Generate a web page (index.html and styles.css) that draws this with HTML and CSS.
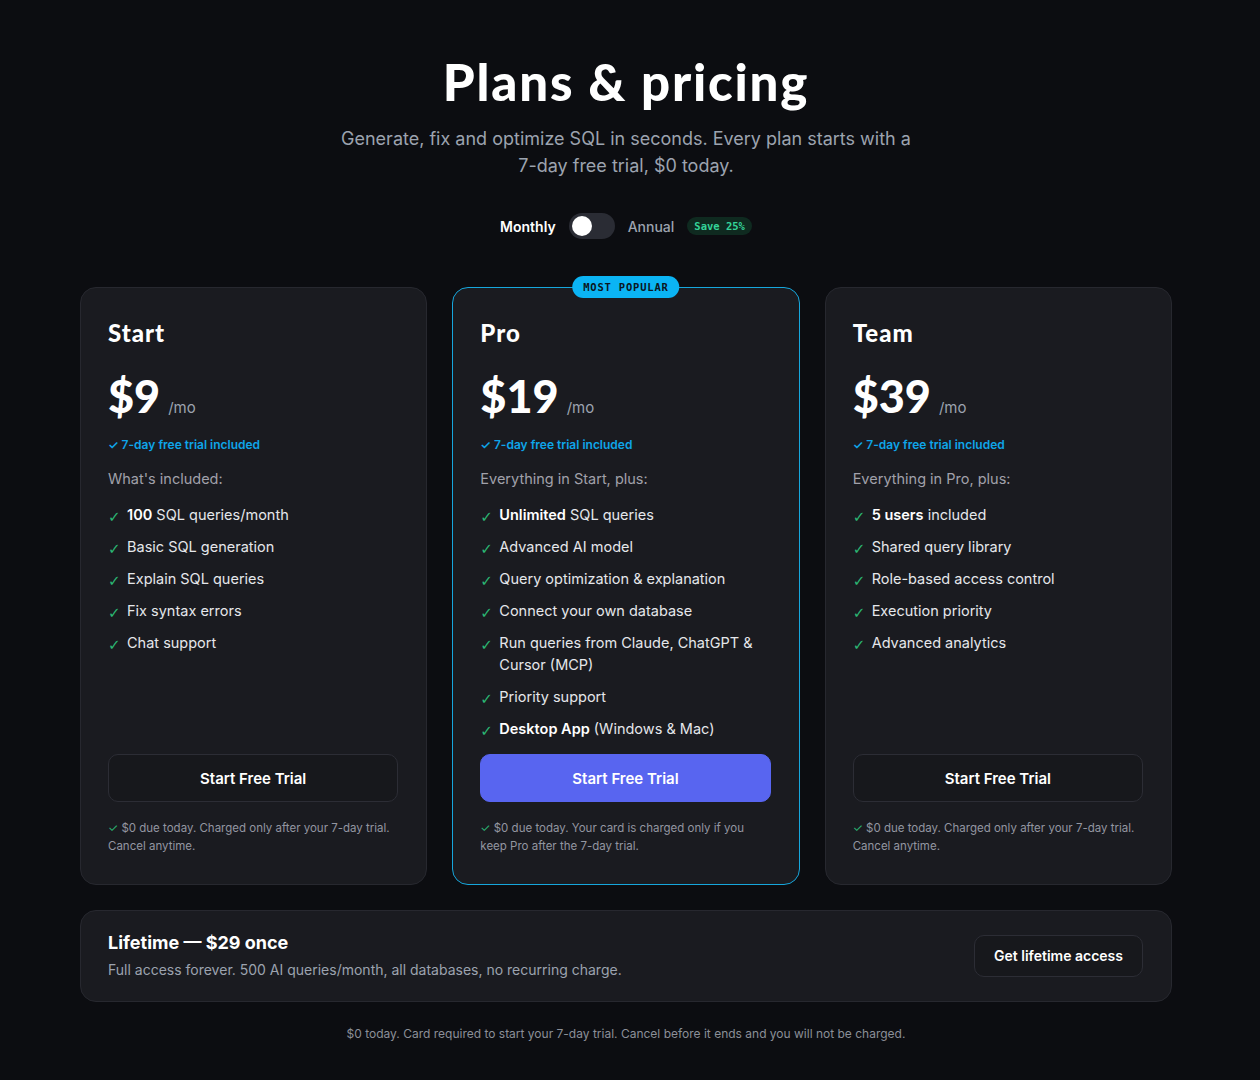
FILE: index.html
```html
<!DOCTYPE html>
<html lang="en">
<head>
  <meta charset="UTF-8" />
  <meta name="viewport" content="width=device-width, initial-scale=1" />
  <title>Plans &amp; pricing</title>
  <link rel="stylesheet" href="styles.css">
</head>
<body>

  <div class="page">
    <header class="intro">
      <h1>Plans &amp; pricing</h1>
      <p class="lead">Generate, fix and optimize SQL in seconds. Every plan starts with a 7-day free trial, $0 today.</p>

      <div class="billing">
        <span class="billing-label active">Monthly</span>
        <button class="switch" type="button" aria-label="Toggle annual billing"><span class="knob"></span></button>
        <span class="billing-label">Annual</span>
        <span class="save">Save 25%</span>
      </div>
    </header>

    <div class="plans">
      <div class="plan">
        <h2>Start</h2>
        <div class="price"><span class="amount">$9</span><span class="per">/mo</span></div>
        <div class="trial">✓ 7-day free trial included</div>
        <div class="included">What's included:</div>
        <ul class="features">
          <li><span class="tick">✓</span><span><b>100</b> SQL queries/month</span></li>
          <li><span class="tick">✓</span><span>Basic SQL generation</span></li>
          <li><span class="tick">✓</span><span>Explain SQL queries</span></li>
          <li><span class="tick">✓</span><span>Fix syntax errors</span></li>
          <li><span class="tick">✓</span><span>Chat support</span></li>
        </ul>
        <button class="btn" type="button">Start Free Trial</button>
        <p class="fine">✓ $0 due today. Charged only after your 7-day trial. Cancel anytime.</p>
      </div>

      <div class="plan featured">
        <span class="badge">MOST POPULAR</span>
        <h2>Pro</h2>
        <div class="price"><span class="amount">$19</span><span class="per">/mo</span></div>
        <div class="trial">✓ 7-day free trial included</div>
        <div class="included">Everything in Start, plus:</div>
        <ul class="features">
          <li><span class="tick">✓</span><span><b>Unlimited</b> SQL queries</span></li>
          <li><span class="tick">✓</span><span>Advanced AI model</span></li>
          <li><span class="tick">✓</span><span>Query optimization &amp; explanation</span></li>
          <li><span class="tick">✓</span><span>Connect your own database</span></li>
          <li><span class="tick">✓</span><span>Run queries from Claude, ChatGPT &amp; Cursor (MCP)</span></li>
          <li><span class="tick">✓</span><span>Priority support</span></li>
          <li><span class="tick">✓</span><span><b>Desktop App</b> (Windows &amp; Mac)</span></li>
        </ul>
        <button class="btn btn-primary" type="button">Start Free Trial</button>
        <p class="fine">✓ $0 due today. Your card is charged only if you keep Pro after the 7-day trial.</p>
      </div>

      <div class="plan">
        <h2>Team</h2>
        <div class="price"><span class="amount">$39</span><span class="per">/mo</span></div>
        <div class="trial">✓ 7-day free trial included</div>
        <div class="included">Everything in Pro, plus:</div>
        <ul class="features">
          <li><span class="tick">✓</span><span><b>5 users</b> included</span></li>
          <li><span class="tick">✓</span><span>Shared query library</span></li>
          <li><span class="tick">✓</span><span>Role-based access control</span></li>
          <li><span class="tick">✓</span><span>Execution priority</span></li>
          <li><span class="tick">✓</span><span>Advanced analytics</span></li>
        </ul>
        <button class="btn" type="button">Start Free Trial</button>
        <p class="fine">✓ $0 due today. Charged only after your 7-day trial. Cancel anytime.</p>
      </div>
    </div>

    <div class="lifetime">
      <div>
        <h3>Lifetime — $29 once</h3>
        <p>Full access forever. 500 AI queries/month, all databases, no recurring charge.</p>
      </div>
      <button class="btn btn-small" type="button">Get lifetime access</button>
    </div>

    <p class="footnote">$0 today. Card required to start your 7-day trial. Cancel before it ends and you will not be charged.</p>
  </div>

</body>
</html>
```

FILE: styles.css
```css
body {
  margin: 0;
  padding: 0 8px 0 0;
  background: #0c0d11;
  color: #e5e7eb;
  font-family: Inter, "Noto Sans", sans-serif;
}
.page {
  max-width: 1092px;
  margin: 0 auto;
  padding: 54px 0 40px;
}
.intro {
  text-align: center;
}
h1 {
  margin: 0;
  font-family: Lato, "Open Sans", sans-serif;
  font-weight: 900;
  font-size: 51px;
  line-height: 55px;
  color: #fff;
  letter-spacing: 1.8px;
}
.lead {
  max-width: 580px;
  margin: 16px auto 0;
  font-size: 18px;
  line-height: 27px;
  color: #9ca3af;
}
.billing {
  margin-top: 34px;
  display: flex;
  justify-content: center;
  align-items: center;
  gap: 13px;
}
.billing-label {
  font-size: 14px;
  font-weight: 500;
  color: #9ca3af;
}
.billing-label.active {
  color: #fff;
  font-weight: 600;
}
.switch {
  width: 46px;
  height: 26px;
  border: none;
  border-radius: 13px;
  background: #2a2c34;
  padding: 3px;
  display: flex;
  align-items: center;
  cursor: pointer;
}
.knob {
  width: 20px;
  height: 20px;
  border-radius: 50%;
  background: #fff;
}
.save {
  font-family: "DejaVu Sans Mono", monospace;
  font-size: 10.5px;
  font-weight: bold;
  color: #34d399;
  background: #0f2a20;
  padding: 3px 7px;
  border-radius: 10px;
}

.plans {
  margin-top: 48px;
  display: grid;
  grid-template-columns: repeat(3, 1fr);
  gap: 25px;
}
.plan {
  position: relative;
  display: flex;
  flex-direction: column;
  background: #1a1b20;
  border: 1px solid #27282f;
  border-radius: 16px;
  padding: 30px 28px 29px 27px;
}
.plan.featured {
  border-color: #16a6dc;
}
.badge {
  position: absolute;
  top: -12px;
  left: 50%;
  transform: translateX(-50%);
  background: #0bb4f4;
  color: #0b1620;
  font-family: "DejaVu Sans Mono", monospace;
  font-weight: bold;
  font-size: 10.5px;
  letter-spacing: 0.8px;
  padding: 5px 11px;
  border-radius: 12px;
  white-space: nowrap;
}
h2 {
  margin: 0;
  font-family: Lato, "Open Sans", sans-serif;
  font-weight: 900;
  font-size: 24px;
  line-height: 30px;
  letter-spacing: 1px;
  color: #fff;
}
.price {
  margin-top: 26px;
  display: flex;
  align-items: baseline;
  gap: 8px;
}
.amount {
  font-family: Lato, "Open Sans", sans-serif;
  font-weight: 900;
  font-size: 45px;
  line-height: 44px;
  color: #fff;
}
.per {
  font-size: 15px;
  color: #9ca3af;
}
.trial {
  margin-top: 18px;
  font-size: 12px;
  line-height: 18px;
  font-weight: 600;
  color: #0ea5e9;
}
.included {
  margin-top: 14px;
  font-size: 14.5px;
  line-height: 22px;
  color: #a1a1aa;
}
.features {
  list-style: none;
  margin: 14px 0 0;
  padding: 0;
  display: flex;
  flex-direction: column;
  gap: 10px;
}
.features li {
  display: flex;
  font-size: 14.5px;
  line-height: 22px;
  color: #e5e7eb;
}
.features b {
  font-weight: 600;
  color: #fff;
}
.tick {
  flex: none;
  width: 19px;
  color: #2bb673;
  font-family: "DejaVu Sans", sans-serif;
  font-size: 15px;
  line-height: 22px;
  position: relative;
  top: 2px;
}
.btn {
  height: 48px;
  width: 100%;
  background: #17181c;
  border: 1px solid #2c2d35;
  border-radius: 10px;
  color: #fff;
  font-family: Inter, "Noto Sans", sans-serif;
  font-size: 15px;
  font-weight: 600;
  cursor: pointer;
}
.plan .btn {
  margin-top: auto;
}
.featured .features {
  margin-bottom: 14px;
}
.btn-primary {
  background: #5865f0;
  border-color: #5865f0;
}
.fine {
  margin: 17px 0 0;
  font-size: 11.5px;
  line-height: 18px;
  color: #9396a0;
}
.fine::first-letter {
  color: #2bb673;
}

.lifetime {
  margin-top: 25px;
  display: flex;
  justify-content: space-between;
  align-items: center;
  background: #1a1b20;
  border: 1px solid #27282f;
  border-radius: 16px;
  padding: 20px 28px 21px 27px;
}
.lifetime h3 {
  margin: 0;
  font-size: 18px;
  line-height: 24px;
  font-weight: 700;
  color: #fff;
}
.lifetime p {
  margin: 5px 0 0;
  font-size: 14px;
  line-height: 20px;
  color: #9ca3af;
}
.btn-small {
  width: auto;
  height: 42px;
  padding: 0 19px;
  font-size: 14px;
}
.footnote {
  margin: 24px 0 0;
  text-align: center;
  font-size: 12px;
  color: #8b8f98;
}
```
